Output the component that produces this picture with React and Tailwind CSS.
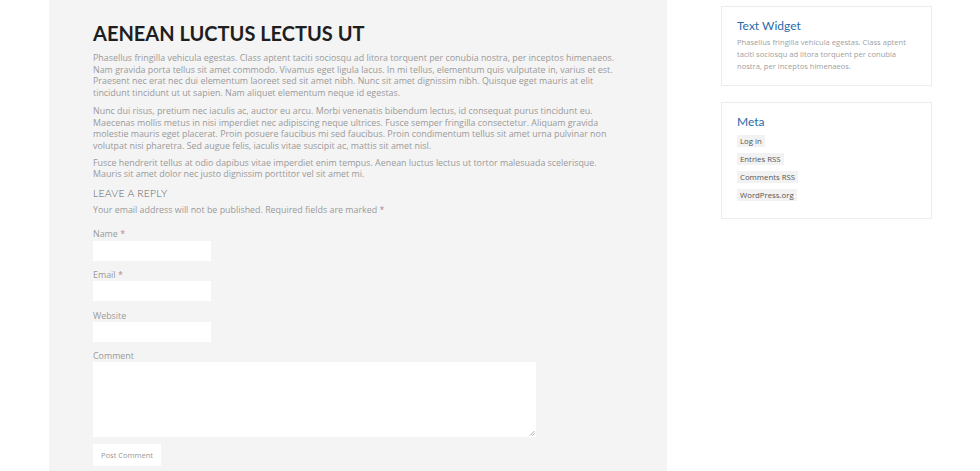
export default function App() {
  const body = "font-['Open_Sans',sans-serif]";
  return (
    <div className={`w-[980px] h-[471px] overflow-hidden bg-white flex ${body}`}>
      <div className="ml-[49px] w-[618px] h-full bg-[#f4f4f4] pl-[44px] pr-[44px] pt-[20px]">
        <h1 className="font-['Lato',sans-serif] font-bold text-[20px] leading-[26px] text-[#1e1e1e]">AENEAN LUCTUS LECTUS UT</h1>
        <div className="mt-[6px] text-[8.9px] leading-[11.7px] text-[#9a9a9a]">
          <p>Phasellus fringilla vehicula egestas. Class aptent taciti sociosqu ad litora torquent per conubia nostra, per inceptos himenaeos. Nam gravida porta tellus sit amet commodo. Vivamus eget ligula lacus. In mi tellus, elementum quis vulputate in, varius et est. Praesent nec erat nec dui elementum laoreet sed sit amet nibh. Nunc sit amet dignissim nibh. Quisque eget mauris at elit tincidunt tincidunt ut ut sapien. Nam aliquet elementum neque id egestas.</p>
          <p className="mt-[6px]">Nunc dui risus, pretium nec iaculis ac, auctor eu arcu. Morbi venenatis bibendum lectus, id consequat purus tincidunt eu. Maecenas mollis metus in nisi imperdiet nec adipiscing neque ultrices. Fusce semper fringilla consectetur. Aliquam gravida molestie mauris eget placerat. Proin posuere faucibus mi sed faucibus. Proin condimentum tellus sit amet urna pulvinar non volutpat nisi pharetra. Sed augue felis, iaculis vitae suscipit ac, mattis sit amet nisl.</p>
          <p className="mt-[5px]">Fusce hendrerit tellus at odio dapibus vitae imperdiet enim tempus. Aenean luctus lectus ut tortor malesuada scelerisque. Mauris sit amet dolor nec justo dignissim porttitor vel sit amet mi.</p>
        </div>
        <h3 className="mt-[7px] font-['Lato',sans-serif] font-light text-[10.5px] leading-[13px] text-[#666] tracking-[0.2px]">LEAVE A REPLY</h3>
        <p className="mt-[4px] text-[8.9px] leading-[12px] text-[#9a9a9a]">Your email address will not be published. Required fields are marked <span className="text-[#b58a8a]">*</span></p>
        <div className="mt-[12px] flex flex-col text-[8.9px] leading-[12px] text-[#9a9a9a]">
          <label>Name <span className="text-[#b58a8a]">*</span></label>
          <div className="mt-[1px] w-[118px] h-[20px] bg-white"></div>
          <label className="mt-[8px]">Email <span className="text-[#b58a8a]">*</span></label>
          <div className="w-[118px] h-[20px] bg-white"></div>
          <label className="mt-[9px]">Website</label>
          <div className="w-[118px] h-[20px] bg-white"></div>
          <label className="mt-[8px]">Comment</label>
          <div className="relative w-[443px] h-[75px] bg-white">
            <svg className="absolute right-[1px] bottom-[1px]" width="6" height="6" viewBox="0 0 6 6">
              <path d="M1 5.5 L5.5 1 M3.5 5.5 L5.5 3.5" stroke="#888" strokeWidth="0.7" />
            </svg>
          </div>
          <div className="mt-[7px] w-[68px] h-[22px] bg-white flex items-center justify-center text-[7.5px] text-[#999]">Post Comment</div>
        </div>
      </div>
      <div className="ml-[54px] w-[211px] pt-[6px] flex flex-col gap-[16px]">
        <div className="border border-[#ececec] h-[80px] px-[15px] pt-[11px]">
          <h4 className="font-['Lato',sans-serif] text-[12px] leading-[15px] text-[#2a6aa8]">Text Widget</h4>
          <p className="mt-[4px] text-[7.6px] leading-[11.8px] text-[#a0a0a0]">Phasellus fringilla vehicula egestas. Class aptent taciti sociosqu ad litora torquent per conubia nostra, per inceptos himenaeos.</p>
        </div>
        <div className="border border-[#ececec] h-[117px] px-[15px] pt-[11px]">
          <h4 className="font-['Lato',sans-serif] text-[12px] leading-[15px] text-[#2a6aa8]">Meta</h4>
          <ul className="mt-[6px] flex flex-col gap-[6px] items-start text-[7.8px] leading-[12px] text-[#555]">
            <li className="bg-[#f2f2f2] px-[3px]">Log in</li>
            <li className="bg-[#f2f2f2] px-[3px]">Entries RSS</li>
            <li className="bg-[#f2f2f2] px-[3px]">Comments RSS</li>
            <li className="bg-[#f2f2f2] px-[3px]">WordPress.org</li>
          </ul>
        </div>
      </div>
    </div>
  );
}
